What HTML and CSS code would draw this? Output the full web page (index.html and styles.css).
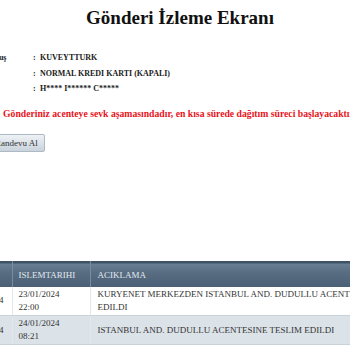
FILE: index.html
```html
<!DOCTYPE html>
<html lang="tr">
<head>
  <meta charset="UTF-8">
  <title>Gönderi İzleme Ekranı</title>
  <link rel="stylesheet" href="styles.css">
</head>
<body>
  <h1 class="title">Gönderi İzleme Ekranı</h1>

  <div class="info">
    <div class="info-row">
      <span class="info-label">Kuruluş</span>
      <span class="info-sep">:</span>
      <span class="info-value">KUVEYTTURK</span>
    </div>
    <div class="info-row">
      <span class="info-label">Ürün</span>
      <span class="info-sep">:</span>
      <span class="info-value">NORMAL KREDI KARTI (KAPALI)</span>
    </div>
    <div class="info-row">
      <span class="info-label">Alıcı</span>
      <span class="info-sep">:</span>
      <span class="info-value">H**** I****** C*****</span>
    </div>
  </div>

  <p class="notice">Gönderiniz acenteye sevk aşamasındadır, en kısa sürede dağıtım süreci başlayacaktır.</p>

  <button class="btn">Randevu Al</button>

  <table class="moves">
    <colgroup>
      <col class="c-id">
      <col class="c-date">
      <col class="c-desc">
    </colgroup>
    <thead>
      <tr>
        <th class="col-id">IL</th>
        <th class="col-date">ISLEMTARIHI</th>
        <th>ACIKLAMA</th>
      </tr>
    </thead>
    <tbody>
      <tr>
        <td class="col-id">34</td>
        <td class="col-date">23/01/2024<br>22:00</td>
        <td>KURYENET MERKEZDEN ISTANBUL AND. DUDULLU ACENTESINE SEVK<br>EDILDI</td>
      </tr>
      <tr class="alt">
        <td class="col-id">34</td>
        <td class="col-date">24/01/2024<br>08:21</td>
        <td>ISTANBUL AND. DUDULLU ACENTESINE TESLIM EDILDI</td>
      </tr>
    </tbody>
  </table>
</body>
</html>
```

FILE: styles.css
```css
* {
  margin: 0;
  padding: 0;
  box-sizing: border-box;
}

html, body {
  overflow: hidden;
}

body {
  font-family: "Liberation Serif", "Times New Roman", serif;
  background: #fff;
  color: #222;
  width: 350px;
}

.title {
  font-size: 19px;
  line-height: 22px;
  font-weight: bold;
  text-align: center;
  padding-left: 10px;
  margin-top: 7px;
  color: #111;
}

.info {
  margin-top: 21px;
  margin-left: -22px;
}

.info-row {
  display: grid;
  grid-template-columns: 55px 7px auto;
  height: 15.5px;
  line-height: 15.5px;
  font-size: 8px;
  font-weight: bold;
  color: #1a1a1a;
  white-space: nowrap;
}

.notice {
  margin-top: 10px;
  margin-left: 3px;
  font-size: 9.7px;
  line-height: 13px;
  font-weight: bold;
  color: #e8141b;
  white-space: nowrap;
}

.btn {
  display: block;
  margin-top: 14px;
  margin-left: -12px;
  height: 18px;
  padding: 0 6px;
  font-family: "Liberation Serif", serif;
  font-size: 9px;
  color: #333;
  background: linear-gradient(#eef2f5, #c9d3dc);
  border: 1px solid #aeb9c4;
  border-radius: 2px;
}

.moves {
  table-layout: fixed;
  width: 560px;
  margin-top: 109px;
  margin-left: -48px;
  border-collapse: collapse;
  font-size: 9px;
  white-space: nowrap;
}

.c-id { width: 60px; }
.c-date { width: 78px; }

.moves thead tr {
  background: linear-gradient(#3f5367 0, #3f5367 2px, #6a7e92 3px, #586d82 45%, #4b6076 100%);
}

.moves th {
  height: 26px;
  padding: 3px 7px 0;
  text-align: left;
  font-weight: normal;
  color: #e2e9ef;
  border-left: 1px solid #7a8c9e;
}

.moves td {
  height: 29px;
  padding: 0 7px;
  line-height: 13px;
  color: #333;
  border-left: 1px solid #e3e8ec;
  border-bottom: 1px solid #c9d1d9;
}

.moves .col-id {
  text-align: right;
  padding-right: 8px;
  border-left: none;
}

.moves th.col-id {
  text-align: left;
}

.moves .col-date {
  padding-left: 6px;
}

.moves .alt td {
  background: #dbe2e8;
}
```
